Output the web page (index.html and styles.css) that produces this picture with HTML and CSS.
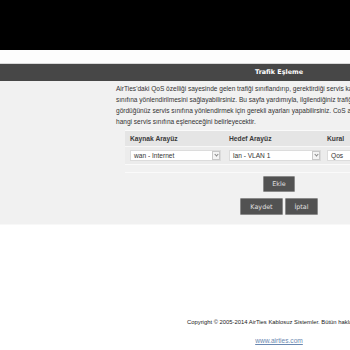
FILE: index.html
```html
<!DOCTYPE html>
<html lang="tr">
<head>
  <meta charset="UTF-8">
  <title>Trafik Eşleme - AirTies</title>
  <link rel="stylesheet" href="styles.css">
</head>
<body>
<div class="page">

  <div class="top-black"></div>
  <div class="top-white"></div>

  <div class="title-bar">
    <div class="side"></div>
    <div class="column"><h1>Trafik Eşleme</h1></div>
  </div>

  <section class="main">
    <div class="side"></div>
    <div class="column">
      <p class="intro">
        AirTies'daki QoS özelliği sayesinde gelen trafiği sınıflandırıp, gerektirdiği servis kalitesi<br>
        sınıfına yönlendirilmesini sağlayabilirsiniz. Bu sayfa yardımıyla, ilgilendiğiniz trafiği<br>
        gördüğünüz servis sınıfına yönlendirmek için gerekli ayarları yapabilirsiniz. CoS alanı ise<br>
        hangi servis sınıfına eşleneceğini belirleyecektir.
      </p>

      <div class="map-table">
        <div class="row head">
          <div class="cell c1">Kaynak Arayüz</div>
          <div class="cell c2">Hedef Arayüz</div>
          <div class="cell c3">Kural</div>
        </div>
        <div class="row">
          <div class="cell c1">
            <div class="select w1"><span>wan - Internet</span><i class="arrow"></i></div>
          </div>
          <div class="cell c2">
            <div class="select w2"><span>lan - VLAN 1</span><i class="arrow"></i></div>
          </div>
          <div class="cell c3">
            <div class="select w3"><span>Qos</span><i class="arrow"></i></div>
          </div>
        </div>
      </div>

      <div class="line"></div>

      <div class="buttons">
        <button class="btn btn-add">Ekle</button>
      </div>
      <div class="buttons">
        <button class="btn btn-save">Kaydet</button>
        <button class="btn btn-cancel">İptal</button>
      </div>
    </div>
  </section>

  <footer>
    <div class="side"></div>
    <div class="column">
      <p class="copy">Copyright © 2005-2014 AirTies Kablosuz Sistemler. Bütün hakla</p>
      <a href="#" class="site">www.airties.com</a>
    </div>
  </footer>

</div>
</body>
</html>
```

FILE: styles.css
```css
html, body {
  margin: 0;
  padding: 0;
  background: white;
  overflow: hidden;
}

body {
  font-family: "Liberation Sans", Arial, sans-serif;
  color: #333;
}

.page {
  width: 560px;
}

.side {
  width: 116px;
  flex: none;
}

.column {
  width: 326px;
  flex: none;
}

.top-black {
  height: 50px;
  background-color: black;
}

.top-white {
  height: 13px;
  background-color: #fdfdfd;
  border-bottom: 1px solid #d9d9d9;
}

.title-bar {
  display: flex;
  height: 17px;
  background-color: #474747;
}

.title-bar h1 {
  margin: 0;
  text-align: center;
  color: white;
  font-family: "DejaVu Sans", Verdana, sans-serif;
  font-size: 6.4px;
  line-height: 17px;
  font-weight: bold;
}

.main {
  display: flex;
  height: 143px;
  background-color: #f1f1f1;
  border-bottom: 1px solid #f8f8f8;
}

.intro {
  margin: 2px 0 0 0;
  font-size: 6.55px;
  line-height: 11px;
  color: #333;
  white-space: nowrap;
}

.map-table {
  margin: 3px 0 0 9px;
  width: 330px;
  border-top: 1px solid #fafafa;
  border-bottom: 1px solid #fafafa;
}

.row {
  display: flex;
  align-items: center;
  height: 17px;
  background-color: #ececec;
}

.row.head {
  height: 15px;
  background-color: #e5e5e5;
  border-bottom: 1px solid #f7f7f7;
  font-weight: bold;
  font-size: 6.7px;
  color: #3a3a3a;
}

.cell {
  padding-left: 5px;
  box-sizing: border-box;
}

.c1 { width: 99px; }
.c2 { width: 99px; }
.c3 { width: 60px; padding-left: 4px; }

.select {
  display: flex;
  align-items: center;
  justify-content: space-between;
  height: 11px;
  box-sizing: border-box;
  border: 1px solid #dcdcdc;
  background-color: white;
  font-size: 6.6px;
  color: #333;
}

.select span {
  padding-left: 3px;
}

.w1 { width: 91px; }
.w2 { width: 92px; }
.w3 { width: 40px; }

.arrow {
  width: 8px;
  height: 9px;
  box-sizing: border-box;
  border: 1px solid #c8c8c8;
  background-color: #f4f4f4;
  position: relative;
}

.arrow::after {
  content: "";
  position: absolute;
  left: 2px;
  top: 1px;
  width: 2px;
  height: 2px;
  border-right: 1px solid #888;
  border-bottom: 1px solid #888;
  transform: rotate(45deg);
}

.line {
  margin: 7px 0 0 9px;
  height: 1px;
  background-color: #fafafa;
}

.buttons {
  display: flex;
  justify-content: center;
  gap: 2px;
}

.btn {
  font-family: "DejaVu Sans", Verdana, sans-serif;
  font-size: 6.4px;
  color: #e0e0e0;
  background-color: #525252;
  border: 1px solid #8a8a8a;
  border-radius: 1px;
  padding: 0;
  height: 16px;
}

.btn-add {
  margin-top: 3px;
  width: 32px;
}

.btn-save {
  margin-top: 6px;
  width: 43px;
  height: 17px;
}

.btn-cancel {
  margin-top: 6px;
  width: 33px;
  height: 17px;
}

footer {
  display: flex;
  padding-top: 93px;
}

footer .column {
  text-align: center;
}

.copy {
  margin: 0 0 0 71px;
  text-align: left;
  font-size: 5.85px;
  color: #222;
  white-space: nowrap;
  line-height: 8px;
}

.site {
  display: inline-block;
  margin-top: 11px;
  font-size: 6.6px;
  color: #6a87b0;
  text-decoration: underline;
}
```
